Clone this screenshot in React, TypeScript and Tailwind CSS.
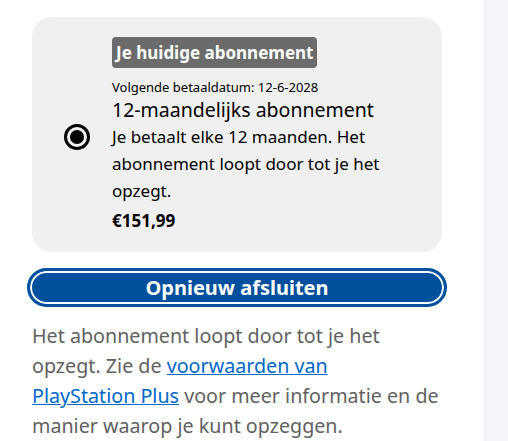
import React from "react";

export default function App() {
  return (
    <div
      className="w-[508px] h-[441px] flex bg-white overflow-hidden"
      style={{ fontFamily: '"Noto Sans", "Open Sans", sans-serif' }}
    >
      {/* main column */}
      <div className="w-[483px] pl-8 pt-[17px]">
        <div className="w-[410px] flex flex-col">
          {/* plan card */}
          <div className="flex items-center rounded-[20px] bg-[#f0f0f0] pl-8 pr-4 pt-5 pb-[19px]">
            <div className="w-[26px] h-[26px] mt-1 rounded-full border-[3px] border-black flex items-center justify-center shrink-0">
              <div className="w-[14px] h-[14px] rounded-full bg-black"></div>
            </div>
            <div className="ml-[22px] flex flex-col items-start text-black">
              <span className="rounded-[4px] bg-[#6b6b6b] px-1 py-[3px] text-[17px] font-bold leading-[25px] text-white">
                Je huidige abonnement
              </span>
              <p className="mt-[9px] text-[13px] leading-[20px]">
                Volgende betaaldatum: 12-6-2028
              </p>
              <p className="text-[19.5px] leading-[26px]">12-maandelijks abonnement</p>
              <p className="text-[17px] leading-[27px]">
                Je betaalt elke 12 maanden. Het abonnement loopt door tot je het opzegt.
              </p>
              <p className="mt-[5px] text-[17px] font-bold leading-[24px]">€151,99</p>
            </div>
          </div>

          {/* renew button */}
          <button className="mt-4 -ml-[5px] w-[420px] h-[39px] rounded-full border-[3px] border-[#00509e] bg-[#00509e] shadow-[inset_0_0_0_2px_white] text-[20px] font-bold leading-none text-white">
            Opnieuw afsluiten
          </button>

          <p className="mt-[14px] w-[416px] text-[19.7px] leading-[30px] text-[#616161]">
            Het abonnement loopt door tot je het opzegt. Zie de{" "}
            <a href="#" className="text-[#0068c8] underline">
              voorwaarden van <span className="whitespace-nowrap">PlayStation Plus</span>
            </a>{" "}
            voor meer informatie en de manier waarop je kunt opzeggen.
          </p>
        </div>
      </div>

      {/* side panel */}
      <div className="flex-1 bg-[#f5f6fa]"></div>
    </div>
  );
}
